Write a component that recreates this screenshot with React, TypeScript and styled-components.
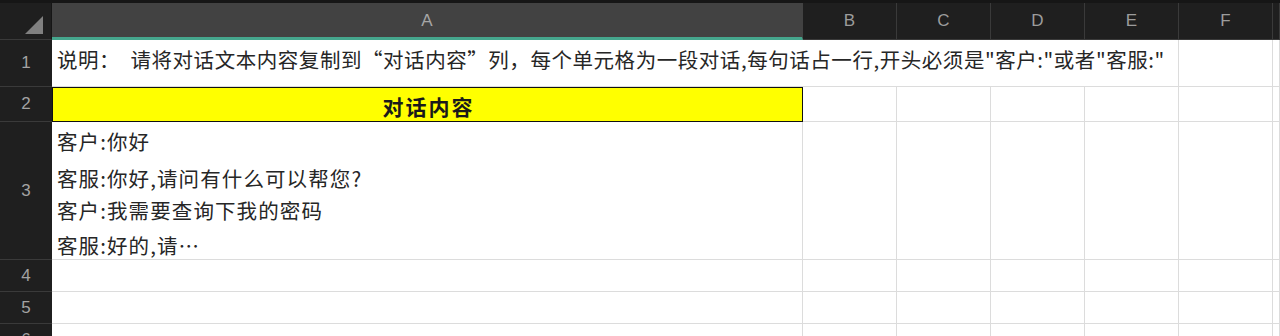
import React from 'react';
import styled, { createGlobalStyle } from 'styled-components';

const GlobalStyle = createGlobalStyle`
  html, body {
    margin: 0;
    padding: 0;
    background: #ffffff;
    overflow: hidden;
  }
`;

const cjk = `"Noto Sans CJK SC", "Noto Sans", sans-serif`;
const latin = `"Liberation Sans", Arial, sans-serif`;

const Sheet = styled.div`
  display: grid;
  grid-template-columns: 52px 751px repeat(5, 94px) 1fr;
  grid-template-rows: 37px 47px 35px 138px 32px 32px 32px;
  padding-top: 3px;
  background: #161616;
  width: 1280px;
  height: 336px;
  overflow: hidden;
  box-sizing: border-box;
`;

const Corner = styled.div`
  background: #1f1f1f;
  border-right: 1px solid #161616;
  border-bottom: 1px solid #3a3a3a;
  display: flex;
  align-items: flex-end;
  justify-content: flex-end;
  padding: 0 8px 5px 0;
  box-sizing: border-box;
`;

const ColHeader = styled.div<{ $selected?: boolean }>`
  background: ${(p) => (p.$selected ? '#424242' : '#1f1f1f')};
  border-right: 1px solid ${(p) => (p.$selected ? '#424242' : '#3a3a3a')};
  border-bottom: ${(p) => (p.$selected ? '3px solid #45a68d' : '1px solid #3a3a3a')};
  color: ${(p) => (p.$selected ? '#a6a6a6' : '#9c9c9c')};
  font-family: ${latin};
  font-size: 17px;
  display: flex;
  align-items: center;
  justify-content: center;
  padding-top: ${(p) => (p.$selected ? '2px' : '0')};
  box-sizing: border-box;
`;

const RowHeader = styled.div`
  background: #1f1f1f;
  border-bottom: 1px solid #3a3a3a;
  color: #a3a3a3;
  font-family: ${latin};
  font-size: 17px;
  display: flex;
  align-items: center;
  justify-content: center;
  box-sizing: border-box;
`;

const Cell = styled.div<{ $span?: number }>`
  grid-column: span ${(p) => p.$span ?? 1};
  background: #ffffff;
  border-right: 1px solid #dcdcdc;
  border-bottom: 1px solid #dcdcdc;
  box-sizing: border-box;
`;

const NoteCell = styled(Cell)`
  font-family: ${cjk};
  font-size: 20.5px;
  letter-spacing: 0.55px;
  color: #262626;
  display: flex;
  align-items: center;
  padding: 0 0 8px 5px;
  white-space: nowrap;
`;

const TitleCell = styled.div`
  background: #ffff00;
  border: 1px solid #111111;
  font-family: ${cjk};
  font-size: 21px;
  font-weight: 700;
  letter-spacing: 2px;
  color: #1a1a1a;
  display: flex;
  align-items: center;
  justify-content: center;
  padding: 3px 0 0 2px;
  box-sizing: border-box;
`;

const DialogCell = styled(Cell)`
  font-family: ${cjk};
  font-size: 20.5px;
  letter-spacing: 1.1px;
  color: #262626;
  padding-left: 5px;
  display: flex;
  flex-direction: column;
`;

const Line = styled.div<{ $gap: number }>`
  margin-top: ${(p) => p.$gap}px;
  line-height: 24px;
  white-space: nowrap;
`;

const Triangle = () => (
  <svg width="18" height="18" viewBox="0 0 18 18">
    <polygon points="18,0 18,18 0,18" fill="#808080" />
  </svg>
);

const extraCols = ['B', 'C', 'D', 'E', 'F', ''];

const EmptyCells = ({ count }: { count: number }) => (
  <>
    {Array.from({ length: count }).map((_, i) => (
      <Cell key={i} />
    ))}
  </>
);

const dialog = [
  { text: '客户:你好', gap: 7 },
  { text: '客服:你好,请问有什么可以帮您?', gap: 13 },
  { text: '客户:我需要查询下我的密码', gap: 8 },
  { text: '客服:好的,请…', gap: 11 },
];

const App = () => {
  return (
    <>
      <GlobalStyle />
      <Sheet>
        <Corner>
          <Triangle />
        </Corner>
        <ColHeader $selected>A</ColHeader>
        {extraCols.map((c, i) => (
          <ColHeader key={i}>{c}</ColHeader>
        ))}

        <RowHeader>1</RowHeader>
        <NoteCell $span={5}>
          说明：&nbsp;&nbsp;请将对话文本内容复制到“对话内容”列，每个单元格为一段对话,每句话占一行,开头必须是"客户:"或者"客服:"
        </NoteCell>
        <EmptyCells count={2} />

        <RowHeader>2</RowHeader>
        <TitleCell>对话内容</TitleCell>
        <EmptyCells count={6} />

        <RowHeader>3</RowHeader>
        <DialogCell>
          {dialog.map((d) => (
            <Line key={d.text} $gap={d.gap}>
              {d.text}
            </Line>
          ))}
        </DialogCell>
        <EmptyCells count={6} />

        {[4, 5, 6].map((n) => (
          <React.Fragment key={n}>
            <RowHeader>{n}</RowHeader>
            <EmptyCells count={7} />
          </React.Fragment>
        ))}
      </Sheet>
    </>
  );
};

export default App;
